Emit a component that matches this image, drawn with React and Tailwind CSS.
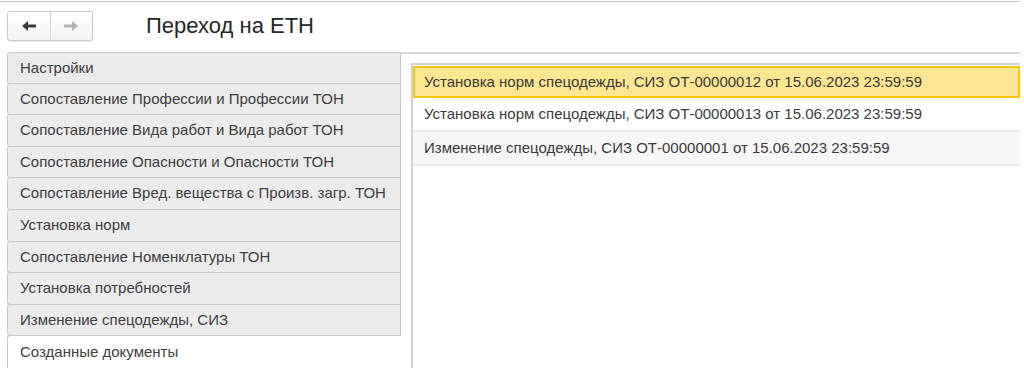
import React from 'react';

const tabs = [
  'Настройки',
  'Сопоставление Профессии и Профессии ТОН',
  'Сопоставление Вида работ и Вида работ ТОН',
  'Сопоставление Опасности и Опасности ТОН',
  'Сопоставление Вред. вещества с Произв. загр. ТОН',
  'Установка норм',
  'Сопоставление Номенклатуры ТОН',
  'Установка потребностей',
  'Изменение спецодежды, СИЗ',
  'Созданные документы',
];

const docs = [
  'Установка норм спецодежды, СИЗ ОТ-00000012 от 15.06.2023 23:59:59',
  'Установка норм спецодежды, СИЗ ОТ-00000013 от 15.06.2023 23:59:59',
  'Изменение спецодежды, СИЗ ОТ-00000001 от 15.06.2023 23:59:59',
];

function Arrow({ dir, color }) {
  return (
    <svg width="14" height="10" viewBox="0 0 14 10">
      {dir === 'left' ? (
        <path d="M0 5 L6 0 L6 3.5 L14 3.5 L14 6.5 L6 6.5 L6 10 Z" fill={color} />
      ) : (
        <path d="M14 5 L8 0 L8 3.5 L0 3.5 L0 6.5 L8 6.5 L8 10 Z" fill={color} />
      )}
    </svg>
  );
}

export default function App() {
  const active = tabs.length - 1;

  return (
    <div className="w-[1024px] h-[368px] bg-white overflow-hidden text-[#333]" style={{ fontFamily: '"Liberation Sans", Arial, sans-serif' }}>
      <div className="w-[1020px] h-[368px] flex flex-col">
        {/* top rule */}
        <div className="mt-[1px] h-[1px] bg-[#c4c4c4]" />

        {/* header */}
        <div className="h-[50px] flex items-start">
          <div className="ml-[7px] mt-[9px] flex h-[30px] w-[86px] rounded-[3px] border border-[#c8c8c8] bg-gradient-to-b from-white to-[#f3f3f3] shadow-[0_1px_1px_rgba(0,0,0,0.08)]">
            <div className="flex-1 flex items-center justify-center border-r border-[#d6d6d6]">
              <Arrow dir="left" color="#3c3c3c" />
            </div>
            <div className="flex-1 flex items-center justify-center">
              <Arrow dir="right" color="#b4b4b4" />
            </div>
          </div>
          <div className="ml-[53px] mt-[11px] text-[22px] leading-[26px] text-[#262626]">Переход на ЕТН</div>
        </div>

        {/* body */}
        <div className="flex flex-1 min-h-0">
          {/* tabs */}
          <div className="ml-[7px] w-[394px] flex flex-col">
            {tabs.map((t, i) => {
              const sel = i === active;
              return (
                <div
                  key={t}
                  className={
                    (i === 0 ? 'h-[32px] ' : 'h-[33px] -mt-[1px] ') +
                    (sel
                      ? 'bg-white border-l border-t border-[#c6c6c6] rounded-tl-[3px]'
                      : 'bg-[#ebebeb] border border-[#c6c6c6] rounded-l-[3px]') +
                    ' flex items-center pl-[12px] text-[15px] text-[#404040] whitespace-nowrap'
                  }
                >
                  {t}
                </div>
              );
            })}
          </div>

          {/* content panel */}
          <div className="flex-1 flex flex-col border-t-2 border-[#d6d6d6] pt-[9px] pl-[10px]">
            <div className="flex-1 border-l-2 border-t-2 border-[#d2d2d2]">
              {docs.map((d, i) => (
                <div
                  key={d}
                  className={
                    i === 0
                      ? 'h-[32px] mt-[1px] bg-[#fde692] border-2 border-[#f5c60e] flex items-center pl-[9px] text-[15px] text-[#3a3a3a] whitespace-nowrap'
                      : 'h-[34px] border-b-2 border-[#ebebeb] flex items-center pl-[11px] text-[15px] text-[#3a3a3a] whitespace-nowrap ' +
                        (i === 2 ? 'bg-[#f7f7f7]' : 'bg-white')
                  }
                >
                  {d}
                </div>
              ))}
            </div>
          </div>
        </div>
      </div>
    </div>
  );
}
